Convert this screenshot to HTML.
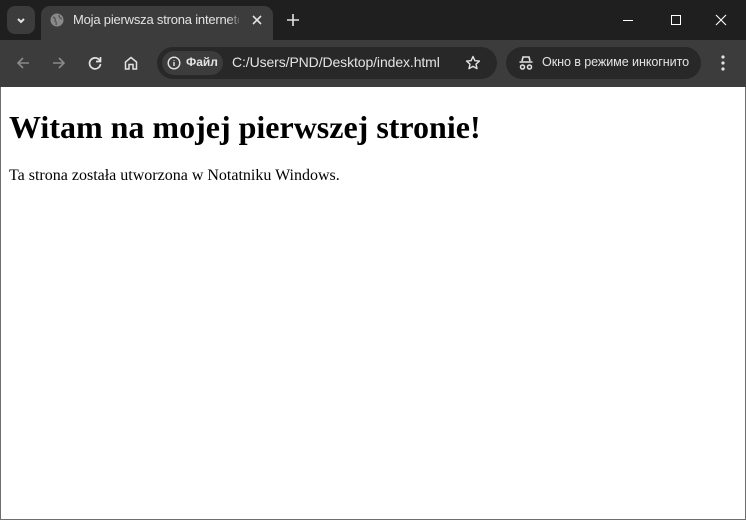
<!DOCTYPE html>
<html><head><meta charset="utf-8"><style>
*{margin:0;padding:0;box-sizing:border-box}
body{width:746px;height:520px;overflow:hidden;background:#1f1f1f;font-family:"Liberation Sans",sans-serif;position:relative}
.abs{position:absolute}
.tab{left:41px;top:6px;width:232px;height:40px;background:#3c3c3c;border-radius:9px 9px 0 0}
.tb{left:0;top:40px;width:746px;height:47px;background:#3c3c3c}
.omni{left:157px;top:47px;width:340px;height:32px;background:#282828;border-radius:16px}
.chip{left:162px;top:51px;width:61px;height:24px;background:#3c3c3c;border-radius:12px}
.inc{left:506px;top:47px;width:195px;height:32px;background:#282828;border-radius:16px}
.t{color:#e3e3e3;font-size:13px;white-space:nowrap}
.page{left:1px;top:87px;width:744px;height:432px;background:#fff}
h1{position:absolute;left:8px;top:22px;font:bold 32px "Liberation Serif",serif;color:#000}
p{position:absolute;left:8px;top:80px;font:16px "Liberation Serif",serif;color:#000}
</style></head><body>
<div class="abs" style="left:7px;top:6px;width:28px;height:28px;background:#3c3c3c;border-radius:8px"></div>
<svg class="abs" style="left:14px;top:13px" width="14" height="14"><path d="M4 6l3 3 3-3" stroke="#e3e3e3" stroke-width="2" fill="none"/></svg>
<div class="abs tab"></div>
<svg class="abs" style="left:50px;top:13px" width="14" height="14"><circle cx="7" cy="7" r="6.5" fill="#8a8a8a"/><path d="M3 4q3 1 2 4q2 1 1 4M9 2q0 3 3 4" stroke="#5a5a5a" stroke-width="1.5" fill="none"/></svg>
<div class="abs t" style="left:73px;top:12px;width:166px;overflow:hidden;letter-spacing:-0.2px">Moja pierwsza strona internetowa</div>
<div class="abs" style="left:228px;top:10px;width:14px;height:20px;background:linear-gradient(90deg,rgba(60,60,60,0),#3c3c3c)"></div>
<svg class="abs" style="left:251px;top:14px" width="12" height="12"><path d="M2 2l8 8M10 2l-8 8" stroke="#e3e3e3" stroke-width="1.6"/></svg>
<svg class="abs" style="left:286px;top:13px" width="14" height="14"><path d="M7 1v12M1 7h12" stroke="#e3e3e3" stroke-width="1.6"/></svg>
<svg class="abs" style="left:622px;top:14px" width="12" height="12"><path d="M1 6.5h10" stroke="#fff" stroke-width="1"/></svg>
<svg class="abs" style="left:670px;top:14px" width="12" height="12"><rect x="1.5" y="1.5" width="9" height="9" stroke="#fff" fill="none"/></svg>
<svg class="abs" style="left:715px;top:14px" width="12" height="12"><path d="M1 1l10 10M11 1L1 11" stroke="#fff" stroke-width="1.1"/></svg>
<div class="abs tb"></div>
<svg class="abs" style="left:15px;top:55px" width="16" height="16"><path d="M14 8H3M8 3L3 8l5 5" stroke="#8a8a8a" stroke-width="1.6" fill="none"/></svg>
<svg class="abs" style="left:51px;top:55px" width="16" height="16"><path d="M2 8h11M8 3l5 5-5 5" stroke="#8a8a8a" stroke-width="1.6" fill="none"/></svg>
<svg class="abs" style="left:87px;top:55px" width="16" height="16"><path d="M13 6A5.5 5.5 0 1 0 13.5 9" stroke="#e3e3e3" stroke-width="1.7" fill="none"/><path d="M13.5 2v4.5H9" stroke="#e3e3e3" stroke-width="1.7" fill="none"/></svg>
<svg class="abs" style="left:123px;top:55px" width="16" height="16"><path d="M2.5 14V7L8 2.5 13.5 7v7H10V9.5H6V14z" stroke="#e3e3e3" stroke-width="1.5" fill="none"/></svg>
<div class="abs omni"></div>
<div class="abs chip"></div>
<svg class="abs" style="left:167px;top:56px" width="14" height="14"><circle cx="7" cy="7" r="5.8" stroke="#e3e3e3" stroke-width="1.4" fill="none"/><path d="M7 6v4M7 4v.8" stroke="#e3e3e3" stroke-width="1.4"/></svg>
<div class="abs t" style="left:186px;top:55px;font-size:12px;font-weight:bold">Файл</div>
<div class="abs t" style="left:232px;top:54px;font-size:14px;letter-spacing:-0.1px">C:/Users/PND/Desktop/index.html</div>
<svg class="abs" style="left:465px;top:55px" width="16" height="16"><path d="M8 1.5l1.9 4.2 4.5.4-3.4 3 1 4.5L8 11.3 4 13.6l1-4.5-3.4-3 4.5-.4z" stroke="#e3e3e3" stroke-width="1.4" fill="none" stroke-linejoin="round"/></svg>
<div class="abs inc"></div>
<svg class="abs" style="left:518px;top:55px" width="16" height="16"><path d="M4 6l1-4h6l1 4M1.5 7h13" stroke="#e3e3e3" stroke-width="1.6" fill="none"/><circle cx="4.5" cy="12" r="2" stroke="#e3e3e3" stroke-width="1.5" fill="none"/><circle cx="11.5" cy="12" r="2" stroke="#e3e3e3" stroke-width="1.5" fill="none"/></svg>
<div class="abs t" style="left:542px;top:55px;font-size:12.6px;letter-spacing:-0.1px">Окно в режиме инкогнито</div>
<svg class="abs" style="left:716px;top:54px" width="14" height="18"><circle cx="7" cy="3" r="1.6" fill="#e3e3e3"/><circle cx="7" cy="9" r="1.6" fill="#e3e3e3"/><circle cx="7" cy="15" r="1.6" fill="#e3e3e3"/></svg>
<div class="abs" style="left:0;top:87px;width:746px;height:433px;background:#6e6e6e"></div>
<div class="abs page">
<h1>Witam na mojej pierwszej stronie!</h1>
<p>Ta strona została utworzona w Notatniku Windows.</p>
</div>
</body></html>
